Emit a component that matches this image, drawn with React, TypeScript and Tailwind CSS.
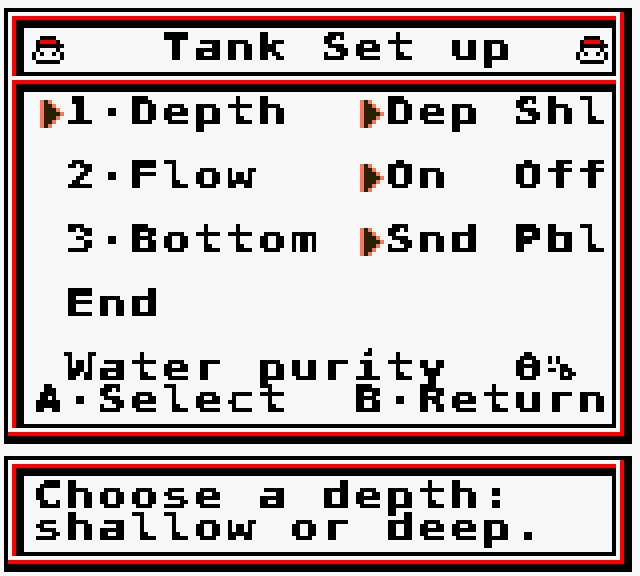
const CAP = ['..kkkk..', '.krrrrk.', '.kkkkkkk', '.k....k.', 'k.k..k.k', 'k......k', '.kkkkkk.'];
const ARROW = ['odo...', 'oddo..', 'odddo.', 'oddddo', 'odddo.', 'oddo..', 'odo...'];
const COLORS: Record<string, string> = { k: '#000000', r: '#ff0000', o: '#f87858', d: '#282000' };

function Sprite({ rows, className }: { rows: string[]; className: string }) {
  return (
    <svg viewBox={`0 0 ${rows[0].length} ${rows.length}`} className={className} shapeRendering="crispEdges">
      {rows.flatMap((row, y) =>
        row.split('').map((c, x) =>
          c === '.' ? null : <rect key={`${x}-${y}`} x={x} y={y} width={1} height={1} fill={COLORS[c]} />
        )
      )}
    </svg>
  );
}

function Cap() {
  return <Sprite rows={CAP} className="mt-1 h-7 w-8 shrink-0" />;
}

function Arrow() {
  return <Sprite rows={ARROW} className="mt-1 ml-2 h-7 w-6" />;
}

// snaps the text to the 4px game boy grid
function PixelFilter() {
  return (
    <svg className="absolute size-0">
      <filter id="pix" filterUnits="userSpaceOnUse" primitiveUnits="userSpaceOnUse" x="0" y="-8" width="640" height="48" colorInterpolationFilters="sRGB">
        <feFlood x="1" y="-7" width="1" height="1" floodColor="#000" />
        <feComposite x="0" y="-8" width="4" height="4" />
        <feTile />
        <feComposite in="SourceGraphic" operator="in" />
        <feComponentTransfer>
          <feFuncA type="discrete" tableValues="0 1 1 1" />
        </feComponentTransfer>
        <feMorphology operator="dilate" radius="1" result="dot" />
        <feOffset in="dot" dx="1" result="right" />
        <feOffset in="dot" dy="1" result="down" />
        <feOffset in="dot" dx="1" dy="1" result="corner" />
        <feMerge>
          <feMergeNode in="dot" />
          <feMergeNode in="right" />
          <feMergeNode in="down" />
          <feMergeNode in="corner" />
        </feMerge>
      </filter>
    </svg>
  );
}

function Txt({ children }: { children: string }) {
  return (
    <span className="block h-8 [filter:url(#pix)]">
      <span className="block origin-left scale-x-[1.25] pl-[1px] font-['DejaVu_Sans_Mono',monospace] text-[38px] leading-[30px] font-bold tracking-[2.72px] whitespace-pre text-black">
        {children}
      </span>
    </span>
  );
}

function Panel({ className, children }: { className: string; children: React.ReactNode }) {
  return (
    <div className="border-t-4 border-l-4 border-[#ff0000]">
      <div className="border-t-8 border-r-4 border-b-4 border-l-8 border-black">
        <div className={className}>{children}</div>
      </div>
    </div>
  );
}

function Win({ children }: { children: React.ReactNode }) {
  return (
    <div className="border-t-4 border-r-8 border-b-8 border-l-4 border-black">
      <div className="flex flex-col gap-1 border-r-4 border-b-4 border-[#ff0000] bg-[#f8f8f8] p-1">{children}</div>
    </div>
  );
}

function MenuRow({ left, right, cursor }: { left: string; right?: string; cursor?: boolean }) {
  return (
    <div className="flex h-8">
      <div className="w-8">{cursor && <Arrow />}</div>
      <div className="w-[288px]">
        <Txt>{left}</Txt>
      </div>
      <div className="w-8">{right && <Arrow />}</div>
      <div className="flex-1">{right && <Txt>{right}</Txt>}</div>
    </div>
  );
}

export default function App() {
  return (
    <div className="flex h-[576px] w-[640px] flex-col gap-3 overflow-hidden bg-[#f8f8f8] pt-2 pr-2 pl-1">
      <PixelFilter />
      <Win>
        <Panel className="flex h-[44px] pt-1 pl-2">
          <Cap />
          <div className="ml-24 w-[416px]">
            <Txt>Tank Set up</Txt>
          </div>
          <Cap />
        </Panel>
        <Panel className="flex h-[332px] flex-col gap-8 pt-1 pl-2">
          <MenuRow cursor left="1·Depth" right="Dep Shl" />
          <MenuRow left="2·Flow" right="On  Off" />
          <MenuRow left="3·Bottom" right="Snd Pbl" />
          <MenuRow left="End" />
          <div>
            <div className="pl-8">
              <Txt>Water purity  0%</Txt>
            </div>
            <Txt>A·Select  B·Return</Txt>
          </div>
        </Panel>
      </Win>
      <Win>
        <Panel className="h-[76px] pt-1 pl-2">
          <Txt>Choose a depth:</Txt>
          <Txt>shallow or deep.</Txt>
        </Panel>
      </Win>
    </div>
  );
}
